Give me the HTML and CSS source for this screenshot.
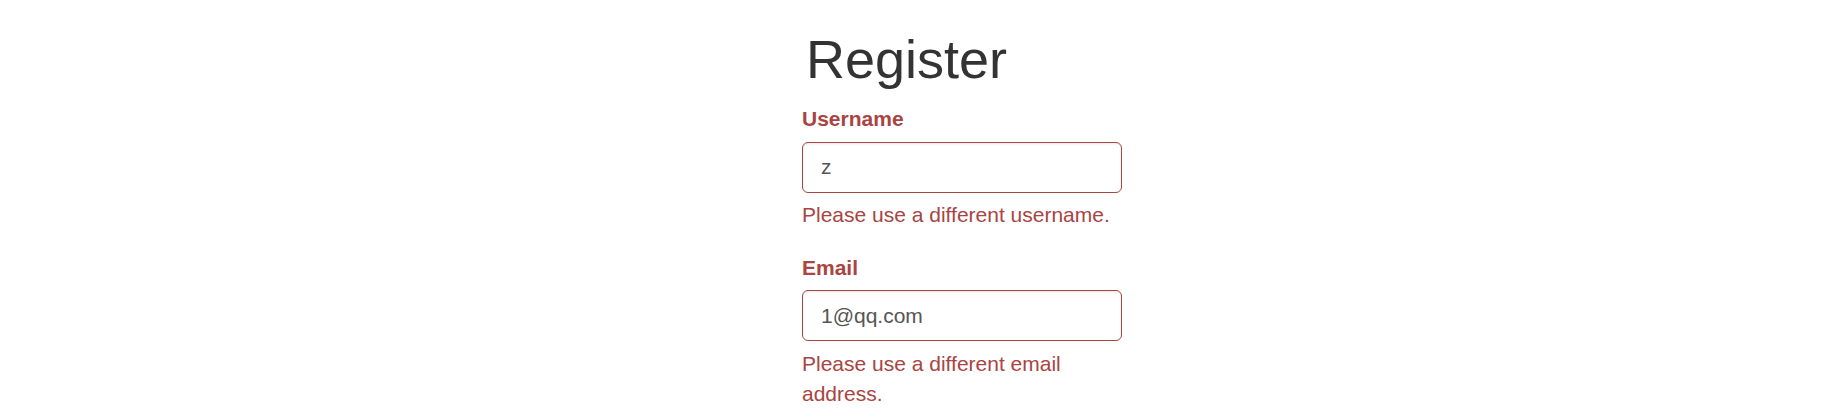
FILE: index.html
```html
<!DOCTYPE html>
<html lang="en">
<head>
<meta charset="utf-8">
<title>Register</title>
<link rel="stylesheet" href="styles.css">
</head>
<body>
<main class="container">
  <h1 class="title">Register</h1>
  <form class="form">
    <div class="form-group has-error">
      <label class="control-label" for="username">Username</label>
      <input class="form-control" id="username" type="text" value="z">
      <p class="help-block">Please use a different username.</p>
    </div>
    <div class="form-group has-error">
      <label class="control-label" for="email">Email</label>
      <input class="form-control" id="email" type="text" value="1@qq.com">
      <p class="help-block">Please use a different email address.</p>
    </div>
  </form>
</main>
</body>
</html>
```
FILE: styles.css
```css
* {
  box-sizing: border-box;
}
html, body {
  margin: 0;
  padding: 0;
  background: #fff;
}
body {
  font-family: "Liberation Sans", Arial, Helvetica, sans-serif;
  font-size: 21px;
  line-height: 30px;
  color: #333;
}
.container {
  margin-left: 802px;
  width: 320px;
}
.title {
  margin: 30px 0 15px 0;
  padding-left: 4px;
  font-size: 54px;
  line-height: 59.4px;
  font-weight: 400;
  color: #333;
}
.form {
  margin: 0;
}
.form-group {
  margin-bottom: 22.5px;
}
.control-label {
  display: inline-block;
  margin-bottom: 7.5px;
  font-weight: 700;
  color: #a94442;
}
.form-control {
  display: block;
  width: 100%;
  height: 51px;
  padding: 9px 18px;
  font-family: inherit;
  font-size: 21px;
  line-height: 30px;
  color: #555;
  background: #fff;
  border: 1.5px solid #a94442;
  border-radius: 6px;
  box-shadow: inset 0 1.5px 1.5px rgba(0, 0, 0, 0.075);
  outline: none;
}
.help-block {
  display: block;
  margin: 7.5px 0 15px 0;
  color: #a94442;
}
```
